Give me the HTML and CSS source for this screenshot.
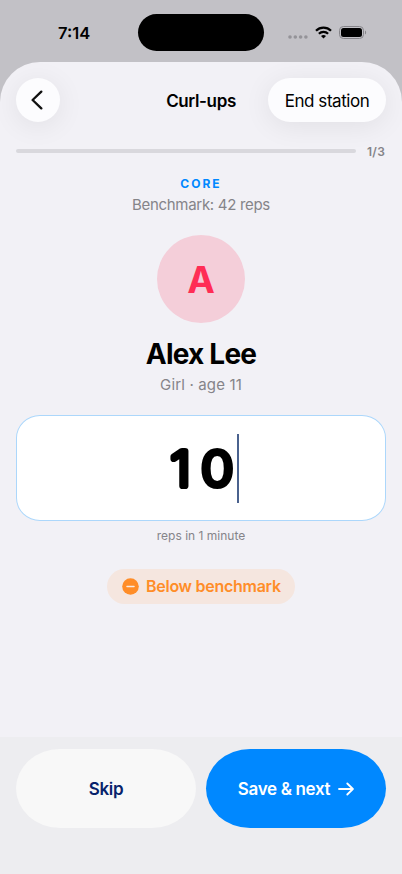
FILE: index.html
```html
<!DOCTYPE html>
<html lang="en">
<head>
<meta charset="utf-8">
<meta name="viewport" content="width=device-width, initial-scale=1">
<title>Curl-ups</title>
<link rel="stylesheet" href="styles.css">
</head>
<body>
<div class="screen">
  <header class="status">
    <span class="time">7:14</span>
    <span class="island"></span>
    <span class="indicators">
      <svg class="cell" width="20" height="4" viewBox="0 0 20 4" fill="#949398"><circle cx="2" cy="2" r="1.8"/><circle cx="7.3" cy="2" r="1.8"/><circle cx="12.6" cy="2" r="1.8"/><circle cx="17.9" cy="2" r="1.8"/></svg>
      <svg class="wifi" width="17" height="13" viewBox="0 0 17 13"><g fill="none" stroke="#000" stroke-width="2.3"><path d="M1 4.7a10.7 10.7 0 0 1 15 0"/><path d="M3.9 7.8a6.6 6.6 0 0 1 9.2 0"/></g><path d="M8.5 12.6 6 10.1a3.6 3.6 0 0 1 5 0z"/></svg>
      <svg class="battery" width="28" height="13" viewBox="0 0 28 13"><rect x=".5" y=".5" width="24" height="12" rx="3.9" fill="none" stroke="#858489"/><rect x="2" y="2" width="21" height="9" rx="2.5"/><path d="M26 4.5v4c1.5-.5 1.5-3.500 0-4z" fill="#858489"/></svg>
    </span>
  </header>
  <main class="sheet">
    <nav class="nav">
      <button class="back" aria-label="Back"><svg width="12" height="20" viewBox="0 0 12 20"><path d="M10.300 1.600 1.600 10l8.700 8.400" fill="none" stroke="#111" stroke-width="2.300" stroke-linecap="round" stroke-linejoin="round"/></svg></button>
      <h1 class="title">Curl-ups</h1>
      <button class="end"><span>End station</span></button>
    </nav>
    <div class="progress"><span class="track"></span><span class="count">1/3</span></div>
    <p class="category">CORE</p>
    <p class="benchmark">Benchmark: 42 reps</p>
    <div class="avatar">A</div>
    <h2 class="name">Alex Lee</h2>
    <p class="detail">Girl · age 11</p>
    <div class="field"><svg class="value" width="70" height="84" viewBox="0 0 70 84"><text transform="scale(1.1 1)" x="3.200 31.200" y="60.200">10</text></svg><span class="caret"></span></div>
    <p class="unit">reps in 1 minute</p>
    <div class="badge">
      <svg width="17" height="17" viewBox="0 0 17 17"><circle cx="8.500" cy="8.500" r="8.300" fill="#ff8d28"/><path d="M5 8.500h7" stroke="#f8ebe4" stroke-width="1.500" stroke-linecap="round"/></svg>
      <span>Below benchmark</span>
    </div>
    <footer class="actions">
      <button class="action skip"><span>Skip</span></button>
      <button class="action save"><span>Save &amp; next</span><svg width="16" height="14" viewBox="0 0 16 14"><path d="M1 7h13.600M9.300 1.500 14.900 7l-5.600 5.500" fill="none" stroke="#fff" stroke-width="1.800" stroke-linecap="round" stroke-linejoin="round"/></svg></button>
    </footer>
  </main>
</div>
</body>
</html>
```
FILE: styles.css
```css
* { box-sizing: border-box; }
body, p, h1, h2 { margin: 0; }
body { font-family: Inter, "Liberation Sans", sans-serif; background: #c2c1c6; color: #000; overflow: hidden; }
button { border: 0; padding: 0; font: inherit; color: inherit; }
svg { display: block; flex: none; }
span, p, h1, h2 { white-space: nowrap; }
.screen { width: 402px; height: 874px; display: flex; flex-direction: column; }
.status { height: 62px; flex: none; display: grid; grid-template-columns: 138px 126px 1fr; align-items: center; padding-top: 4px; }
.time { padding-left: 58px; font-size: 16.500px; font-weight: 600; letter-spacing: 0; }
.island { height: 37px; margin-bottom: 1px; border-radius: 19px; background: #000; }
.indicators { display: flex; align-items: center; padding-left: 24px; padding-bottom: 1px; }
.cell { margin-top: 9px; }
.wifi { margin-left: 7px; }
.battery { margin-left: 7px; }
.sheet { flex: 1; display: flex; flex-direction: column; align-items: center; background: #f2f1f6; border-radius: 40px 40px 0 0; overflow: hidden; }
.nav { width: 370px; height: 44px; margin-top: 16px; display: grid; grid-template-columns: 118px 1fr 118px; align-items: center; }
.back, .end { height: 44px; border-radius: 22px; background: #fcfcfe; box-shadow: 0 4px 28px rgba(0, 0, 0, .075); display: flex; align-items: center; justify-content: center; }
.back { width: 44px; padding-right: 3px; }
.title { padding-top: 1px; text-align: center; font-size: 17px; font-weight: 600; letter-spacing: -.37px; }
.end { padding-top: 1px; font-size: 17px; letter-spacing: -.45px; }
.progress { width: 370px; height: 16px; margin-top: 21px; display: flex; align-items: center; gap: 11px; }
.track { width: 340px; height: 4px; border-radius: 2px; background: #d9d8dd; }
.count { font-size: 12px; font-weight: 600; color: #858489; letter-spacing: .3px; }
.category { margin-top: 17px; line-height: 16px; font-size: 12px; font-weight: 700; letter-spacing: 2px; color: #0088ff; }
.benchmark { margin-top: 3px; line-height: 20px; font-size: 15px; color: #858489; letter-spacing: -.3px; }
.avatar { width: 88px; height: 88px; flex: none; margin-top: 20px; border-radius: 50%; background: #f4ced9; display: flex; align-items: center; justify-content: center; color: #ff2d55; font-size: 37px; font-weight: 700; }
.name { margin-top: 14px; line-height: 34px; font-size: 28px; font-weight: 700; letter-spacing: -.8px; }
.detail { margin-top: 4px; line-height: 20px; font-size: 15px; color: #858489; letter-spacing: .15px; }
.field { width: 370px; height: 106px; flex: none; margin-top: 20px; border: 1px solid #acd7fb; border-radius: 24px / 23px; background: #fff; display: flex; justify-content: center; align-items: center; }
.value { margin-left: 3px; font-size: 48px; font-weight: 200; stroke: #000; stroke-width: 6.200px; stroke-linejoin: round; stroke-linecap: round; overflow: visible; }
.caret { width: 2px; height: 69px; background: #4a628e; }
.unit { margin-top: 7px; line-height: 16px; font-size: 12px; color: #858489; }
.badge { width: 188px; height: 35px; margin-top: 25px; border-radius: 18px; background: #f5e6df; display: flex; align-items: center; padding: 0 0 1px 15px; gap: 7px; color: #ff8d28; font-size: 16px; font-weight: 600; letter-spacing: -.27px; }
.actions { width: 100%; height: 137px; flex: none; margin-top: auto; padding: 12px 16px 0; display: grid; grid-template-columns: 1fr 1fr; align-items: start; gap: 10px; background: #ededf0; }
.action { height: 79px; border-radius: 44px / 39.500px; display: flex; align-items: center; justify-content: center; font-size: 17px; font-weight: 600; letter-spacing: -.34px; padding-top: 1px; }
.skip { background: #f8f8f8; color: #07226b; }
.save { background: #0088ff; color: #fff; gap: 8px; }
```
